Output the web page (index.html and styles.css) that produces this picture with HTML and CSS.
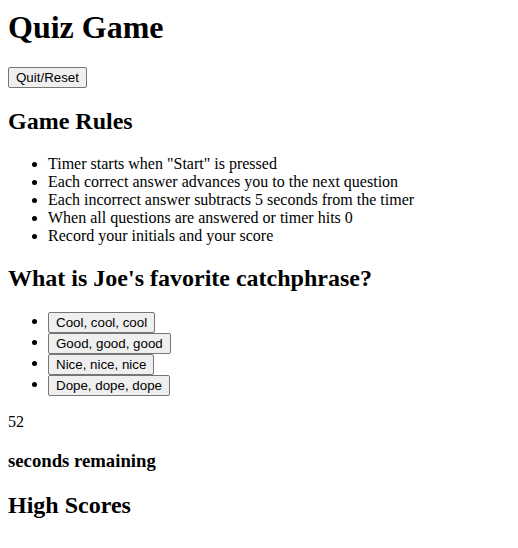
FILE: index.html
```html
<!DOCTYPE html>
<html>
<head>
<meta charset="utf-8">
<title>Quiz Game</title>
<link rel="stylesheet" href="styles.css">
</head>
<body>
<header class="top">
<h1 class="title">Quiz Game</h1>
<button class="btn">Quit/Reset</button>
</header>
<section>
<h2 class="heading">Game Rules</h2>
<ul class="list">
<li>Timer starts when "Start" is pressed</li>
<li>Each correct answer advances you to the next question</li>
<li>Each incorrect answer subtracts 5 seconds from the timer</li>
<li>When all questions are answered or timer hits 0</li>
<li>Record your initials and your score</li>
</ul>
</section>
<section>
<h2 class="heading">What is Joe's favorite catchphrase?</h2>
<ul class="list">
<li><button class="btn">Cool, cool, cool</button></li>
<li><button class="btn">Good, good, good</button></li>
<li><button class="btn">Nice, nice, nice</button></li>
<li><button class="btn">Dope, dope, dope</button></li>
</ul>
</section>
<div class="timer">52</div>
<h3 class="sub">seconds remaining</h3>
<h2 class="heading">High Scores</h2>
</body>
</html>
```
FILE: styles.css
```css
html, body {
  background: #fff;
}
body {
  margin: 8px;
  font-family: "Liberation Serif", "Times New Roman", serif;
  font-size: 16px;
  color: #000;
}
.title {
  font-size: 32px;
  font-weight: bold;
  margin: 1px 0 21.44px;
}
.heading {
  font-size: 24px;
  font-weight: bold;
  margin: 19.92px 0;
}
.sub {
  font-size: 18.72px;
  font-weight: bold;
  margin: 18.72px 0;
}
.list {
  margin: 17px 0 16px;
  padding-left: 40px;
}
.timer {
  margin: 0;
  padding-top: 1px;
}
.btn {
  font-family: "Liberation Sans", Arial, sans-serif;
  font-size: 13.333px;
  line-height: 15px;
  color: #000;
  background: #efefef;
  border: 1px solid #767676;
  border-radius: 2px;
  padding: 2px 7px;
  vertical-align: middle;
}
```
